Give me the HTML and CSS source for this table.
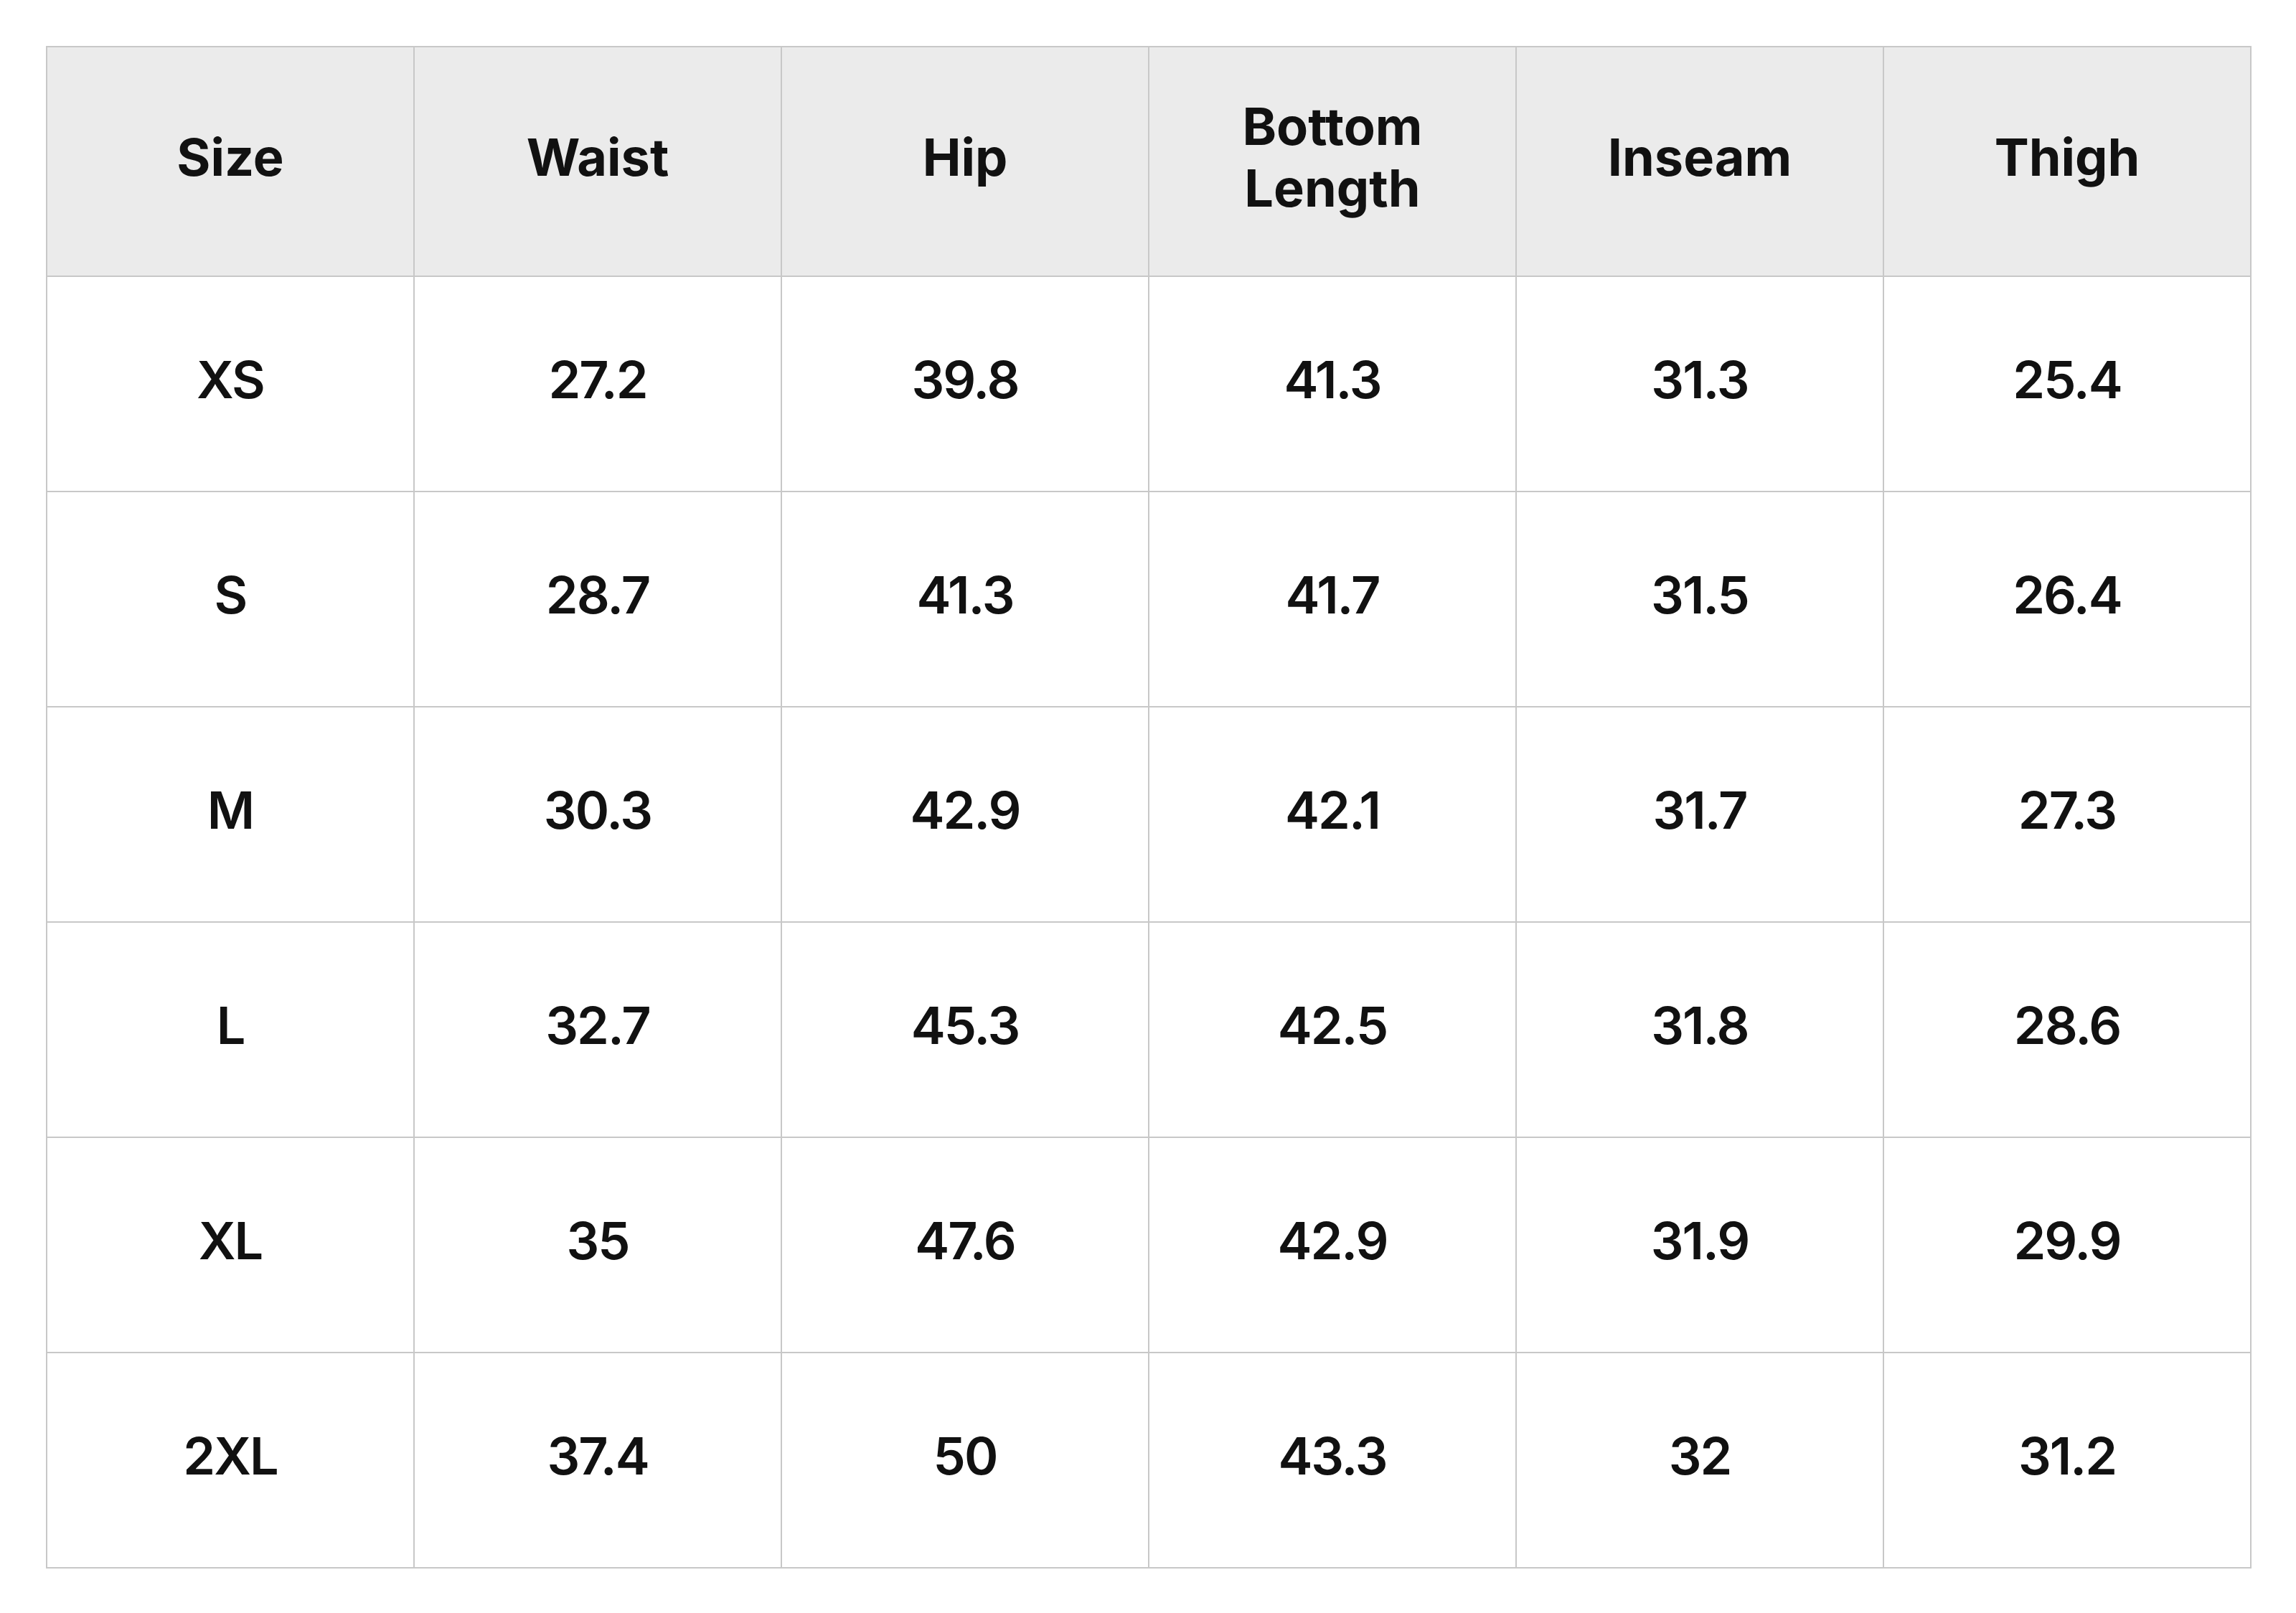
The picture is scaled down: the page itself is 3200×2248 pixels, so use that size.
FILE: index.html
```html
<!DOCTYPE html>
<html lang="en">
<head>
<meta charset="utf-8">
<title>Size Chart</title>
<link rel="stylesheet" href="styles.css">
</head>
<body>
<table class="size-table">
  <thead>
    <tr>
      <th>Size</th>
      <th>Waist</th>
      <th>Hip</th>
      <th>Bottom<br>Length</th>
      <th>Inseam</th>
      <th>Thigh</th>
    </tr>
  </thead>
  <tbody>
    <tr><td>XS</td><td>27.2</td><td>39.8</td><td>41.3</td><td>31.3</td><td>25.4</td></tr>
    <tr><td>S</td><td>28.7</td><td>41.3</td><td>41.7</td><td>31.5</td><td>26.4</td></tr>
    <tr><td>M</td><td>30.3</td><td>42.9</td><td>42.1</td><td>31.7</td><td>27.3</td></tr>
    <tr><td>L</td><td>32.7</td><td>45.3</td><td>42.5</td><td>31.8</td><td>28.6</td></tr>
    <tr><td>XL</td><td>35</td><td>47.6</td><td>42.9</td><td>31.9</td><td>29.9</td></tr>
    <tr><td>2XL</td><td>37.4</td><td>50</td><td>43.3</td><td>32</td><td>31.2</td></tr>
  </tbody>
</table>
</body>
</html>
```
FILE: styles.css
```css
html, body {
  margin: 0;
  padding: 0;
  background: #ffffff;
}
body {
  padding: 64px 0 0 64px;
  font-family: Inter, "Noto Sans", sans-serif;
  color: #111111;
}
.size-table {
  width: 3074px;
  table-layout: fixed;
  border-collapse: separate;
  border-spacing: 0;
  border-top: 2px solid #c8c8c8;
  border-left: 2px solid #c8c8c8;
}
.size-table th,
.size-table td {
  border-right: 2px solid #c8c8c8;
  border-bottom: 2px solid #c8c8c8;
  text-align: center;
  vertical-align: middle;
  padding: 0 0 12px 0;
  font-size: 72px;
  line-height: 86px;
}
.size-table th {
  background: #ebebeb;
  height: 306px;
  font-weight: 700;
}
.size-table td {
  height: 286px;
  font-weight: 600;
  letter-spacing: -2px;
}
```
